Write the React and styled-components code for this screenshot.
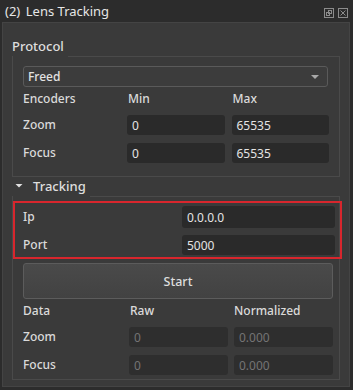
import styled, { createGlobalStyle } from "styled-components";

const GlobalStyle = createGlobalStyle`
  html, body {
    margin: 0;
    padding: 0;
    background: #2c2c2c;
  }
  * {
    box-sizing: border-box;
  }
`;

const Window = styled.div`
  width: 353px;
  height: 390px;
  background: #2c2c2c;
  font-family: "Noto Sans", "Open Sans", sans-serif;
  font-size: 12px;
  color: #dcdcdc;
  display: flex;
  flex-direction: column;
  overflow: hidden;
`;

const TitleBar = styled.div`
  height: 22px;
  flex: none;
  display: flex;
  align-items: center;
  justify-content: space-between;
  padding: 0 5px 0 5px;
  font-size: 13px;
  color: #e6e6e6;
`;

const TitleButtons = styled.div`
  display: flex;
  gap: 4px;
  margin-top: 4px;
  color: #8c8c8c;
`;

const Panel = styled.div`
  flex: 1;
  margin: 0 3px 3px 2px;
  background: #3a3a3a;
  border: 1px solid #444;
  padding: 9px 9px 0 9px;
  display: flex;
  flex-direction: column;
`;

const GroupHeader = styled.div`
  display: flex;
  align-items: flex-end;
  height: ${(p) => p.$h};
  padding-left: ${(p) => (p.$arrow ? "3px" : "0")};
  gap: 4px;
`;

const GroupTitle = styled.div`
  font-size: 13px;
  font-weight: 500;
  color: #dedede;
  display: flex;
  align-items: center;
  gap: 10px;
  line-height: 20px;
`;

const HeaderLine = styled.div`
  flex: 1;
  border-bottom: 1px solid #4a4a4a;
  margin-bottom: -1px;
`;

const GroupBody = styled.div`
  border: 1px solid #4a4a4a;
  border-top: none;
  padding: ${(p) => p.$pad};
  display: flex;
  flex-direction: column;
`;

const Combo = styled.div`
  height: 21px;
  border: 1px solid #5a5a5a;
  border-radius: 3px;
  background: #3c3c3c;
  display: flex;
  align-items: center;
  justify-content: space-between;
  padding: 0 8px 0 4px;
  font-weight: 500;
  color: #e2e2e2;
  margin-right: 1px;
`;

const ComboArrow = styled.div`
  width: 0;
  height: 0;
  border-left: 4px solid transparent;
  border-right: 4px solid transparent;
  border-top: 4px solid #a8a8a8;
`;

const Grid = styled.div`
  display: grid;
  grid-template-columns: ${(p) => p.$label} 1fr 1fr;
  grid-template-rows: 16px 20px 20px;
  column-gap: ${(p) => p.$gap};
  row-gap: 8px;
  align-items: center;
  margin-top: ${(p) => p.$top || "0"};
`;

const Label = styled.div`
  font-weight: 500;
  color: #dadada;
  line-height: 16px;
`;

const HeadLabel = styled(Label)`
  margin-left: ${(p) => p.$shift || "0"};
`;

const Input = styled.div`
  height: ${(p) => p.$h || "20px"};
  border-radius: 3px;
  background: ${(p) => (p.$disabled ? "#2e2e2e" : "#2a2a2a")};
  color: ${(p) => (p.$disabled ? "#747474" : "#e4e4e4")};
  display: flex;
  align-items: center;
  padding-left: 5px;
`;

const Highlight = styled.div`
  margin: 5px -9px 0 -10px;
  border: 2px solid #d8262d;
  padding: 3px 5px 2px 8px;
  display: grid;
  grid-template-columns: 159px 1fr;
  row-gap: 7px;
  align-items: center;
`;

const StartButton = styled.button`
  margin: 4px 0 0 0;
  height: 36px;
  border: 1px solid #5c5c5c;
  border-radius: 3px;
  background: linear-gradient(#4a4a4a, #424242);
  color: #dedede;
  font-family: inherit;
  font-size: 12.5px;
  font-weight: 500;
`;

const FloatIcon = () => (
  <svg width="10" height="10" viewBox="0 0 10 10" fill="none" stroke="currentColor" strokeWidth="1">
    <rect x="0.5" y="0.5" width="9" height="9" />
    <rect x="4.5" y="2.5" width="3" height="3" />
    <rect x="2.5" y="4.5" width="3" height="3" />
  </svg>
);

const CloseIcon = () => (
  <svg width="10" height="10" viewBox="0 0 10 10" fill="none" stroke="currentColor" strokeWidth="1">
    <rect x="0.5" y="0.5" width="9" height="9" />
    <path d="M2.5 2.5 L7.5 7.5 M7.5 2.5 L2.5 7.5" />
  </svg>
);

const Arrow = () => (
  <svg width="8" height="6" viewBox="0 0 8 6">
    <path d="M0.5 1 L7.5 1 L4 4.5 Z" fill="#e0e0e0" />
  </svg>
);

export default function App() {
  return (
    <Window>
      <GlobalStyle />
      <TitleBar>
        <span>(2)&thinsp; Lens Tracking</span>
        <TitleButtons>
          <FloatIcon />
          <CloseIcon />
        </TitleButtons>
      </TitleBar>
      <Panel>
        <GroupHeader $h="24px">
          <GroupTitle>Protocol</GroupTitle>
          <HeaderLine />
        </GroupHeader>
        <GroupBody $pad="10px 10px 13px 10px">
          <Combo>
            <span>Freed</span>
            <ComboArrow />
          </Combo>
          <Grid $label="97px" $gap="7px" $top="4px">
            <Label>Encoders</Label>
            <HeadLabel $shift="1px">Min</HeadLabel>
            <HeadLabel $shift="1px">Max</HeadLabel>
            <Label>Zoom</Label>
            <Input>0</Input>
            <Input>65535</Input>
            <Label>Focus</Label>
            <Input>0</Input>
            <Input>65535</Input>
          </Grid>
        </GroupBody>

        <GroupHeader $arrow $h="19px">
          <GroupTitle>
            <Arrow />
            Tracking
          </GroupTitle>
          <HeaderLine />
        </GroupHeader>
        <GroupBody $pad="0 6px 4px 10px">
          <Highlight>
            <Label>Ip</Label>
            <Input $h="22px">0.0.0.0</Input>
            <Label>Port</Label>
            <Input>5000</Input>
          </Highlight>
          <StartButton>Start</StartButton>
          <Grid $label="100px" $gap="6px" $top="4px">
            <Label>Data</Label>
            <HeadLabel $shift="1px">Raw</HeadLabel>
            <HeadLabel>Normalized</HeadLabel>
            <Label>Zoom</Label>
            <Input $disabled>0</Input>
            <Input $disabled>0.000</Input>
            <Label>Focus</Label>
            <Input $disabled>0</Input>
            <Input $disabled>0.000</Input>
          </Grid>
        </GroupBody>
      </Panel>
    </Window>
  );
}
